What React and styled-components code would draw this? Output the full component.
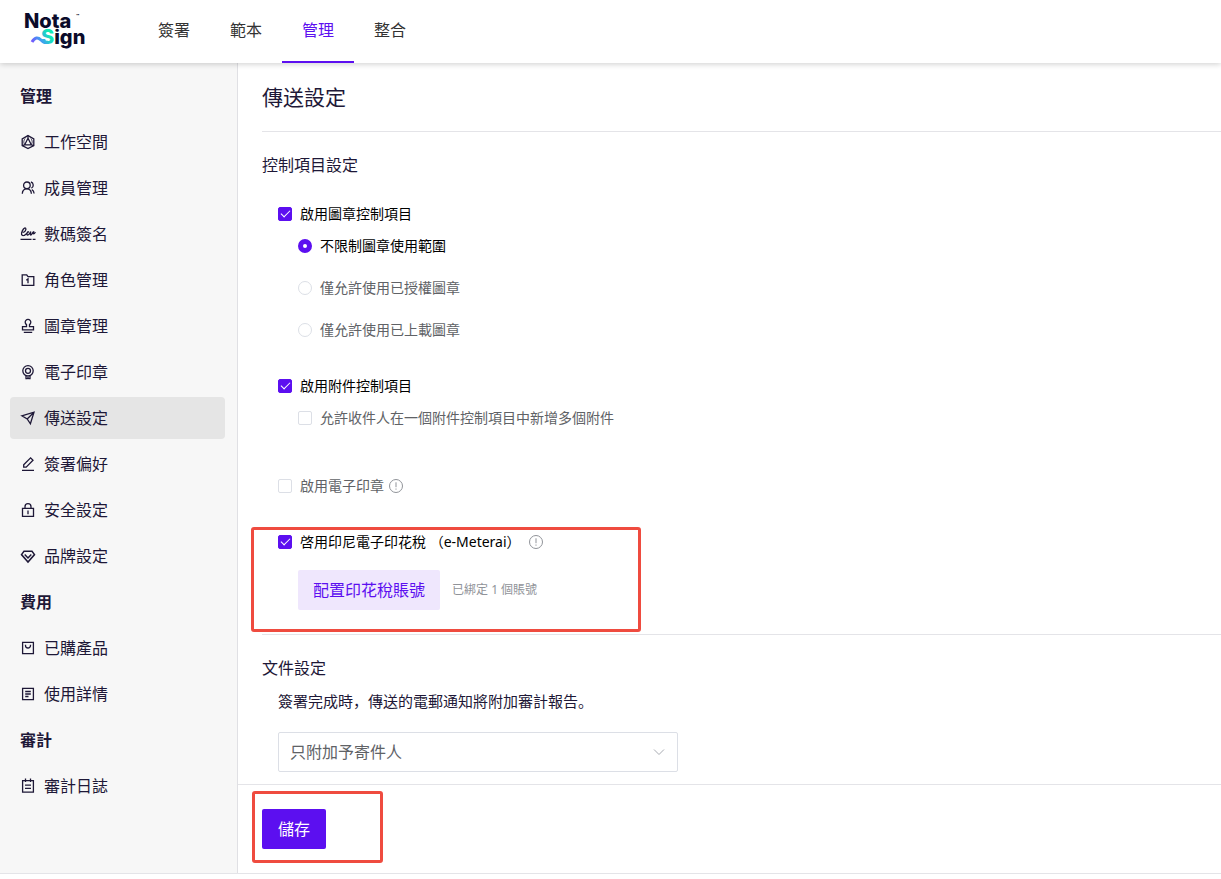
import React, { useState } from 'react';
import styled, { createGlobalStyle, css } from 'styled-components';

const GlobalStyle = createGlobalStyle`
    * {
        box-sizing: border-box;
    }

    body {
        margin: 0;
        background: #ffffff;
        color: #1e1837;
        font-family: 'Noto Sans', 'Noto Sans CJK SC', sans-serif;
        font-size: 14px;
    }

    button, input, select {
        font-family: inherit;
    }
`;

const Page = styled.div`
    min-height: 100vh;
    display: flex;
    flex-direction: column;
`;

const Header = styled.header`
    position: relative;
    z-index: 1;
    display: flex;
    align-items: stretch;
    height: 63px;
    padding-left: 24px;
    background: #ffffff;
    box-shadow: 0 1px 6px rgba(0, 0, 0, 0.2);
`;

const LogoLink = styled.a`
    display: flex;
    align-items: center;
    width: 114px;
`;

const Nav = styled.nav`
    display: flex;
`;

const NavLink = styled.a`
    display: flex;
    align-items: center;
    padding: 0 20px 1px;
    border-bottom: 2px solid ${({ $active }) => ($active ? '#5c0ff0' : 'transparent')};
    color: ${({ $active }) => ($active ? '#5c0ff0' : '#333333')};
    font-size: 16px;
    line-height: 24px;
    text-decoration: none;
`;

const Body = styled.div`
    flex: 1;
    display: flex;
    margin-bottom: 5px;
    border-bottom: 1px solid #e4e4e8;
`;

const Sidebar = styled.aside`
    flex: none;
    width: 238px;
    padding: 12px 12px 12px 10px;
    background: #f7f7f7;
    border-right: 1px solid #e0e0e4;
`;

const SideTitle = styled.h2`
    margin: 0 0 4px;
    padding: 0 10px;
    font-size: 16px;
    font-weight: 700;
    line-height: 42px;
`;

const SideList = styled.ul`
    margin: 0;
    padding: 0;
    list-style: none;
`;

const SideLink = styled.a`
    display: flex;
    align-items: center;
    gap: 8px;
    height: 42px;
    margin-bottom: 4px;
    padding: 0 10px;
    border-radius: 4px;
    background: ${({ $active }) => ($active ? '#e5e5e5' : 'transparent')};
    color: #1e1837;
    font-size: 16px;
    line-height: 24px;
    text-decoration: none;
`;

const Icon = styled.svg`
    flex: none;
    width: 16px;
    height: 16px;
    fill: none;
    stroke: currentColor;
    stroke-width: 1.3;
`;

const Main = styled.main`
    flex: 1;
    min-width: 0;
    display: flex;
    flex-direction: column;
`;

const Content = styled.div`
    flex: 1;
    padding-left: 24px;
`;

const PageTitle = styled.h1`
    margin: 0;
    padding: 19px 0;
    border-bottom: 1px solid #e4e4e8;
    font-size: 21px;
    font-weight: 400;
    line-height: 30px;
`;

const Section = styled.section`
    padding: 21px 0 ${({ $last }) => ($last ? '12px' : '24px')};
    ${({ $last }) => !$last && css`
        border-bottom: 1px solid #e4e4e8;
    `}
`;

const SectionTitle = styled.h2`
    margin: 0;
    font-size: 16px;
    font-weight: 400;
    line-height: 24px;
`;

const Option = styled.div`
    display: flex;
    align-items: center;
    height: 32px;
    padding-left: ${({ $nested }) => ($nested ? '36px' : '16px')};
`;

const OptionGroup = styled.div`
    position: relative;
    margin-top: ${({ $gap }) => $gap};
`;

const RadioList = styled.div`
    display: flex;
    flex-direction: column;
    gap: 10px;
`;

const OptionLabel = styled.label`
    display: flex;
    align-items: center;
    gap: 8px;
    color: ${({ $checked }) => ($checked ? '#000000' : '#606266')};
    line-height: 20px;
`;

const box = css`
    appearance: none;
    flex: none;
    width: 14px;
    height: 14px;
    margin: 0;
    border: 1px solid #dcdfe6;
    background: #ffffff;
`;

const Checkbox = styled.input`
    ${box}
    display: grid;
    place-items: center;
    border-radius: 2px;

    &:checked {
        border-color: #5c0ff0;
        background: #5c0ff0;
    }

    &:checked::after {
        content: '';
        width: 8px;
        height: 4px;
        margin-bottom: 3px;
        border: solid #ffffff;
        border-width: 0 0 1px 1px;
        transform: rotate(-45deg);
    }
`;

const Radio = styled.input`
    ${box}
    border-radius: 50%;

    &:checked {
        border: 5px solid #5c0ff0;
    }
`;

const Hint = styled.svg`
    flex: none;
    width: 14px;
    height: 14px;
    margin-left: ${({ $wide }) => ($wide ? '8px' : '5px')};
    fill: none;
    stroke: #909399;
`;

const AccountRow = styled.div`
    display: flex;
    align-items: center;
    gap: 12px;
    padding: 12px 0 0 36px;
`;

const Button = styled.button`
    height: 40px;
    padding: 0 ${({ $primary }) => ($primary ? '16px' : '15px')} 2px;
    border: 0;
    border-radius: 2px;
    background: ${({ $primary }) => ($primary ? '#5c0ff0' : '#efe7fd')};
    color: ${({ $primary }) => ($primary ? '#ffffff' : '#5c0ff0')};
    font-size: 16px;
`;

const Bound = styled.span`
    padding-bottom: 2px;
    color: #909399;
    font-size: 12px;
`;

const Highlight = styled.div`
    position: absolute;
    top: ${({ $top }) => $top};
    left: ${({ $left }) => $left};
    width: ${({ $width }) => $width};
    height: ${({ $height }) => $height};
    border: 3px solid #ef4b3f;
    border-radius: 3px;
    pointer-events: none;
`;

const FieldLabel = styled.label`
    display: block;
    padding: 9px 0 19px 16px;
    font-size: 15px;
    line-height: 24px;
`;

const SelectBox = styled.div`
    position: relative;
    width: 400px;
    max-width: 100%;
    margin-left: 16px;
`;

const Select = styled.select`
    appearance: none;
    display: block;
    width: 100%;
    height: 40px;
    padding: 0 36px 0 11px;
    border: 1px solid #dcdfe6;
    border-radius: 2px;
    background: #ffffff;
    color: #606266;
    font-size: 16px;
`;

const Chevron = styled.svg`
    position: absolute;
    top: 13px;
    right: 12px;
    width: 14px;
    height: 14px;
    fill: none;
    stroke: #a8abb2;
    pointer-events: none;
`;

const Footer = styled.footer`
    position: relative;
    padding: 24px;
    border-top: 1px solid #e4e4e8;
`;

const icons = {
    workspace: (
        <>
            <path d="M8 1.6 13.8 4.9V11.5L8 14.6 2.2 11.5V4.9Z" />
            <path d="M8 4.3 4.7 10.8H11.3ZM8 1.6V4.3M2.2 11.5 4.7 10.8M13.8 11.5 11.3 10.8" />
            <path d="M5.2 4.6C3.7 6 3.2 8.2 4.7 10.8M10.8 4.6C12.3 6 12.8 8.2 11.3 10.8" strokeWidth="0.8" />
        </>
    ),
    members: (
        <>
            <circle cx="6.9" cy="5.3" r="3.3" />
            <path d="M2.3 13.8C2.4 11 4.2 8.9 6.9 8.9S11.2 11 11.4 13.8M10.9 2C13.9 2.7 13.9 7 11.4 8.2M11.8 9.6C13.2 10.3 14 11.7 14.1 13.5" />
        </>
    ),
    signature: (
        <>
            <path d="M2.8 6.3C4.7 6.3 6.7 3.6 5.6 2.2 4.5 1.1 2.3 3.9 1.6 7 1.2 9.2 2.6 10.3 4.4 9.3 6.3 8.3 7.3 6.3 8.4 5.8 8 5.3 6.7 7 6.9 8.4 7.1 9.8 9.5 8.8 10.8 5.6 10.3 7.8 10.2 9.6 11.3 8.8 12.3 8 12.6 6.2 13.5 5.9 12.9 8.3 13.8 8.8 15.4 6.2" />
            <path d="M0.5 13.3H11.5M12.7 13.3H15.5" />
        </>
    ),
    role: (
        <>
            <path d="M2.2 2.8H6.7L8 4.7H13.8V13.3H2.2Z" />
            <path d="M6.3 8.2 8 6.9V11.3" />
        </>
    ),
    stamp: (
        <path d="M6.5 8.7V6.6A2.8 2.8 0 1 1 9.5 6.6V8.7H13.5V11.8H2.5V8.7ZM3.8 14.3H12.2" />
    ),
    seal: (
        <>
            <circle cx="8" cy="6.8" r="5.2" />
            <circle cx="8" cy="6.8" r="2.5" />
            <path d="M6 11.7V14.6H7.3L8 13.6 8.7 14.6H10V11.7" />
        </>
    ),
    send: <path d="M1.8 5.8 14 2.2 10.4 13.8 7.2 9ZM7.2 9 14 2.2" />,
    pen: <path d="M3.7 8.7 10.6 1.9 13 4.3 6.2 11.2H3.7ZM2 14.3H14" />,
    lock: <path d="M2.5 6.3H13.5V14.3H2.5ZM5 6.3V4.7A3 3 0 0 1 11 4.7V6.3M8 8.5V12.2" />,
    brand: <path d="M4 3.3H12L14.5 6.6 8 14 1.5 6.6ZM4.7 6.6 8 10 11.3 6.6" strokeWidth="1.5" />,
    product: <path d="M2.6 2.3H13.4V13.7H2.6ZM5.5 4.8V5.5A2.5 2.5 0 0 0 10.5 5.5V4.8" />,
    usage: <path d="M2.6 2.3H13.4V13.7H2.6ZM5.2 5.5H10.8M5.2 8H10.8M5.2 10.5H8.5" />,
    log: <path d="M2.6 2.7H13.4V14.2H2.6ZM5.5 0.6V4M10.5 0.6V4M5 7.2H11M5 10.4H11" />,
};

const menu = [
    {
        title: '管理',
        items: [
            ['workspace', '工作空間'],
            ['members', '成員管理'],
            ['signature', '數碼簽名'],
            ['role', '角色管理'],
            ['stamp', '圖章管理'],
            ['seal', '電子印章'],
            ['send', '傳送設定'],
            ['pen', '簽署偏好'],
            ['lock', '安全設定'],
            ['brand', '品牌設定'],
        ],
    },
    {
        title: '費用',
        items: [
            ['product', '已購產品'],
            ['usage', '使用詳情'],
        ],
    },
    {
        title: '審計',
        items: [['log', '審計日誌']],
    },
];

const tabs = ['簽署', '範本', '管理', '整合'];
const scopes = ['不限制圖章使用範圍', '僅允許使用已授權圖章', '僅允許使用已上載圖章'];

const Logo = () => (
    <svg width="68" height="55" viewBox="0 0 68 55" role="img" aria-label="Nota Sign">
        <defs>
            <linearGradient id="wave" x1="7" y1="38" x2="24" y2="28" gradientUnits="userSpaceOnUse">
                <stop offset="0" stopColor="#7a4dff" />
                <stop offset="0.5" stopColor="#3fa0f0" />
                <stop offset="1" stopColor="#12e8b4" />
            </linearGradient>
        </defs>
        <g fontFamily="Inter, sans-serif" fontWeight="800" fontSize="20" fill="#0b0b2a">
            <text x="0" y="24">Nota</text>
            <text x="17" y="40"><tspan fill="url(#wave)">S</tspan>ign</text>
            <text x="52" y="14" fontSize="5">™</text>
        </g>
        <path d="M8 38C11 33 14 33 17 36S21 39 24 38" fill="none" stroke="url(#wave)" strokeWidth="3" />
    </svg>
);

const InfoHint = ({ wide }) => (
    <Hint viewBox="0 0 14 14" $wide={wide}>
        <circle cx="7" cy="7" r="6.5" />
        <path d="M7 3.3V8.2M7 9.5V10.7" />
    </Hint>
);

const CheckOption = ({ label, nested, initial, hint, wide }) => {
    const [checked, setChecked] = useState(Boolean(initial));

    return (
        <Option $nested={nested}>
            <OptionLabel $checked={checked}>
                <Checkbox type="checkbox" checked={checked} onChange={() => setChecked(!checked)} />
                {label}
            </OptionLabel>
            {hint && <InfoHint wide={wide} />}
        </Option>
    );
};

const App = () => {
    const [scope, setScope] = useState(scopes[0]);

    return (
        <Page>
            <GlobalStyle />
            <Header>
                <LogoLink href="#"><Logo /></LogoLink>
                <Nav>
                    {tabs.map((tab) => (
                        <NavLink key={tab} href="#" $active={tab === '管理'}>{tab}</NavLink>
                    ))}
                </Nav>
            </Header>
            <Body>
                <Sidebar>
                    {menu.map(({ title, items }) => (
                        <div key={title}>
                            <SideTitle>{title}</SideTitle>
                            <SideList>
                                {items.map(([icon, label]) => (
                                    <li key={label}>
                                        <SideLink href="#" $active={icon === 'send'}>
                                            <Icon viewBox="0 0 16 16">{icons[icon]}</Icon>
                                            {label}
                                        </SideLink>
                                    </li>
                                ))}
                            </SideList>
                        </div>
                    ))}
                </Sidebar>
                <Main>
                    <Content>
                        <PageTitle>傳送設定</PageTitle>
                        <Section>
                            <SectionTitle>控制項目設定</SectionTitle>
                            <OptionGroup $gap="21px">
                                <CheckOption label="啟用圖章控制項目" initial />
                                <RadioList>
                                    {scopes.map((item) => (
                                        <Option key={item} $nested>
                                            <OptionLabel $checked={scope === item}>
                                                <Radio
                                                    type="radio"
                                                    name="scope"
                                                    checked={scope === item}
                                                    onChange={() => setScope(item)}
                                                />
                                                {item}
                                            </OptionLabel>
                                        </Option>
                                    ))}
                                </RadioList>
                            </OptionGroup>
                            <OptionGroup $gap="24px">
                                <CheckOption label="啟用附件控制項目" initial />
                                <CheckOption label="允許收件人在一個附件控制項目中新增多個附件" nested />
                            </OptionGroup>
                            <OptionGroup $gap="36px">
                                <CheckOption label="啟用電子印章" hint />
                            </OptionGroup>
                            <OptionGroup $gap="24px">
                                <CheckOption label="啓用印尼電子印花稅 （e-Meterai）" initial hint wide />
                                <AccountRow>
                                    <Button type="button">配置印花稅賬號</Button>
                                    <Bound>已綁定 1 個賬號</Bound>
                                </AccountRow>
                                <Highlight $top="1px" $left="-11px" $width="390px" $height="105px" />
                            </OptionGroup>
                        </Section>
                        <Section $last>
                            <SectionTitle>文件設定</SectionTitle>
                            <FieldLabel htmlFor="report">簽署完成時，傳送的電郵通知將附加審計報告。</FieldLabel>
                            <SelectBox>
                                <Select id="report" defaultValue="sender">
                                    <option value="sender">只附加予寄件人</option>
                                </Select>
                                <Chevron viewBox="0 0 14 14"><path d="M2 4.5 7 9.5 12 4.5" /></Chevron>
                            </SelectBox>
                        </Section>
                    </Content>
                    <Footer>
                        <Button type="button" $primary>儲存</Button>
                        <Highlight $top="6px" $left="14px" $width="131px" $height="72px" />
                    </Footer>
                </Main>
            </Body>
        </Page>
    );
};

export default App;
